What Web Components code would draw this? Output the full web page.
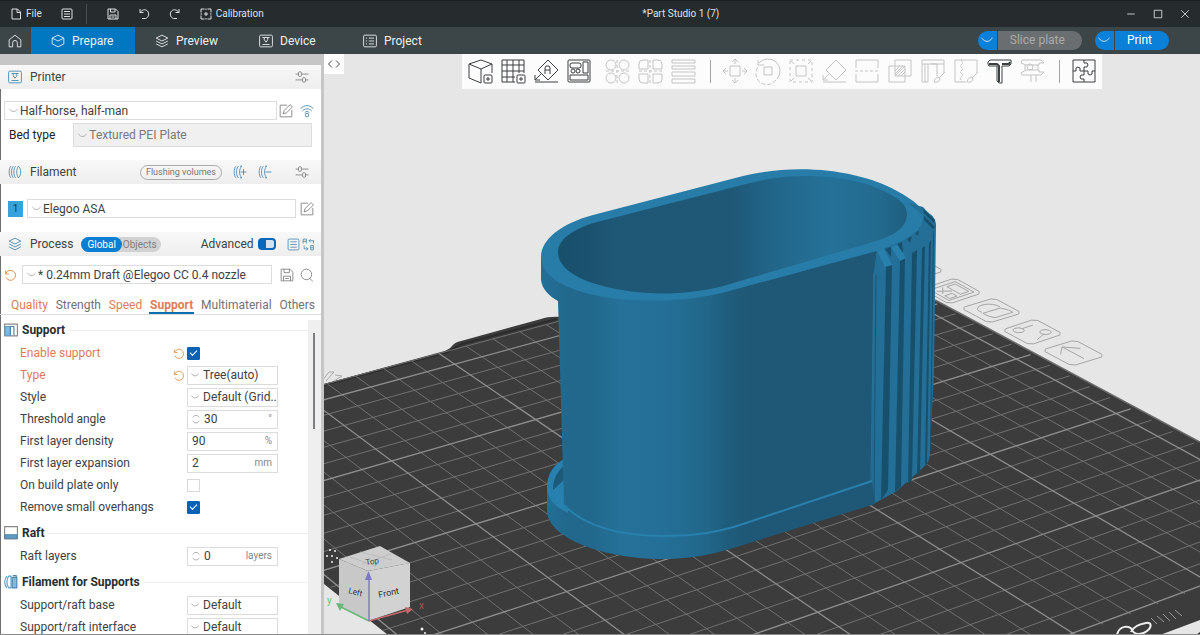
<!DOCTYPE html>
<html lang="en">
<head>
<meta charset="utf-8">
<meta name="viewport" content="width=device-width, initial-scale=1">
<title>Part Studio 1</title>
<style>
    html, body {
        height: 100%;
        margin: 0;
    }
    body {
        font: 12px/16px Roboto, "Noto Sans", sans-serif;
        color: #3e4244;
        overflow: hidden;
    }
</style>
</head>
<body>
<slicer-app></slicer-app>

<script>
// all glyphs are drawn on a 24 x 24 grid
const ICONS = {
    file: '<path d="M4 2h11l6 6v14H4zM14 2v7h7"/>',
    list: '<rect x="2" y="2" width="20" height="20" rx="2"/><path d="M6 7h12M6 12h12M6 17h12"/>',
    save: '<path d="M2 2h15l5 5v15H2zM7 2v6h9V2M6 22v-8h12v8M9 18h6"/>',
    undo: '<path d="M4 2v7h7M4 9C8 3 15 2 19 6s3 13-4 15H8"/>',
    redo: '<path d="M20 2v7h-7M20 9C16 3 9 2 5 6S2 19 9 21h7"/>',
    reset: '<path d="M3 3v7h7M3.500 9.500A10 10 0 1 1 4 17"/>',
    calibrate: '<path d="M2 9V2h7M15 2h7v7M22 15v7h-7M9 22H2v-7M12 8v8M8 12h8M12 1v3M12 20v3M1 12h3M20 12h3"/>',
    home: '<path d="M2 10 12 2l10 8v12h-6v-7a4 4 0 0 0-8 0v7H2z"/>',
    cube: '<path d="M12 2 22 7v10l-10 5L2 17V7zM2 7l10 5 10-5"/>',
    layers: '<path d="M12 2 22 7l-10 5L2 7zM2 12l10 5 10-5M2 17l10 5 10-5"/>',
    device: '<rect x="1" y="2" width="22" height="20" rx="2"/><path d="M6 6h12M9 6v4l3 4 3-4V6M6 18h12"/>',
    project: '<rect x="1" y="2" width="22" height="20" rx="2"/><path d="M5 7h2M5 12h2M5 17h2M10 7h9M10 12h9M10 17h9"/>',
    down: '<path d="M1 8q6 7 11 7t11-7"/>',
    spin: '<path d="M2 7q5-6 10-6t10 6M2 18q5 6 10 6t10-6"/>',
    sliders: '<path d="M1 7h5M12 7h11M1 17h11M18 17h5"/><rect x="6" y="3" width="5" height="8" rx="2"/><rect x="13" y="13" width="5" height="8" rx="2"/>',
    edit: '<path d="M14 2H2v20h20V10M7 17l2-6L19 1l4 4-10 10z"/>',
    wifi: '<path d="M1 8c7-7 15-7 22 0M4 12c5-5 11-5 16 0M8 15c3-3 5-3 8 0"/><circle cx="12" cy="19" r="3"/>',
    spool: '<path d="M5 2c-4 5-4 15 0 20M9 2c-4 5-4 15 0 20M13 2c-4 5-4 15 0 20M18 2c5 5 5 15 0 20-4-5-4-15 0-20z"/>',
    spoolAdd: '<path d="M5 2c-4 5-4 15 0 20M9 2c-4 5-4 15 0 20M15 2c-5 5-5 15 0 20M12 2h3M12 22h3M13 12h10M18 7v10"/>',
    spoolRemove: '<path d="M5 2c-4 5-4 15 0 20M9 2c-4 5-4 15 0 20M15 2c-5 5-5 15 0 20M12 2h3M12 22h3M13 12h10"/>',
    compare: '<path d="M2 10V2h6v8M2 6h6M16 14h5v8h-5zM16 18h5M13 5h9M13 5l3-3M13 5l3 3M21 5v5M4 14v6h7M11 20l-3-3M11 20l-3 3"/>',
    search: '<circle cx="11" cy="11" r="9"/><path d="m17 18 5 5"/>',
    collapse: '<path d="m8 5-7 7 7 7M16 5l7 7-7 7"/>',
    minimize: '<path d="M3 12h18"/>',
    maximize: '<rect x="3" y="3" width="18" height="18"/>',
    close: '<path d="m3 3 18 18M21 3 3 21"/>',
    support: '<rect x="1" y="2" width="22" height="20" stroke="#888"/><path d="M2 6h9v15H2z" fill="#7fbbe0" stroke="#5b9fc9"/><path d="M11 21V6h6v15" stroke="#4a86ad"/>',
    raft: '<rect x="1" y="1" width="22" height="21" stroke="#888"/><path d="M2 15h20v6H2z" fill="#5f9cc4" stroke="#4a86ad"/>',
    spools: '<path d="M5 2C0 7 0 17 5 22M8 2c-4 5-4 15 0 20h4V2z" stroke="#5b9fc9"/><rect x="14" y="4" width="8" height="18" fill="#7fbbe0" stroke="#4a86ad"/><path d="M15 1h6v3" stroke="#4a86ad"/>',
    addCube: '<path d="M13 24 1 19V5l12-4 11 4v9M1 5l12 5 11-5M13 10v14"/><rect x="16" y="16" width="8" height="8" rx="1"/><path d="M18 20h4M20 18v4"/>',
    addPlate: '<path d="M14 23H1V1h22v13M6 1v22M12 1v22M18 1v13M1 6h22M1 12h22M1 18h13"/><rect x="16" y="16" width="8" height="8" rx="1"/><path d="M18 20h4M20 18v4"/>',
    orient: '<path d="m14 1 10 10-10 10L4 11zM11 15v-6l1-2h3l1 2v6M11 11h5M1 23h23M7 15l-6 6M1 16v5h5"/>',
    arrange: '<rect x="1" y="1" width="22" height="22" rx="1"/><rect x="3" y="4" width="11" height="5" rx="2"/><rect x="16" y="3" width="5" height="11"/><circle cx="6" cy="12" r="2"/><circle cx="11" cy="12" r="2"/><path d="M3 16h18v5H3z"/>',
    splitObjects: '<circle cx="6" cy="6" r="5"/><circle cx="19" cy="6" r="5"/><circle cx="6" cy="19" r="5"/><circle cx="19" cy="19" r="5"/><path d="M12 1v23M1 12h23" stroke-dasharray="3 2"/>',
    splitParts: '<path d="M10 1v9H1V5q0-4 4-4zM15 1h5q4 0 4 4v5h-9zM1 15h9v9H5q-4 0-4-4zM15 15h9v5q0 4-4 4h-5z"/><path d="M12 1v23M1 12h23" stroke-dasharray="3 2"/>',
    variable: '<path d="M1 1h23v3H1zM1 7h23v3H1zM1 13h23v4H1zM1 20h23v4H1z"/>',
    move: '<rect x="7" y="7" width="10" height="10"/><path d="M12 5V0M9 3l3-3 3 3M12 19v5M9 21l3 3 3-3M5 12H0M3 9l-3 3 3 3M19 12h5M21 9l3 3-3 3"/>',
    rotate: '<rect x="8" y="8" width="8" height="8"/><path d="M3 4a11 11 0 0 1 18 16"/><path d="M20 21A11 11 0 0 1 2 8" stroke-dasharray="4 2"/><path d="M2 1v5h6"/>',
    scale: '<rect x="7" y="7" width="10" height="10"/><rect x="1" y="1" width="22" height="22" stroke-dasharray="3 3"/><path d="m5 5-3-3M19 5l3-3M5 19l-3 3M19 19l3 3"/>',
    face: '<path d="m14 1 10 10-10 10L4 11zM1 23h23M7 15l-6 6M1 16v5h5"/>',
    cut: '<path d="M1 9V1h22v8M1 15v8h22v-8"/><path d="M0 12h24" stroke-dasharray="3 2"/>',
    boolean: '<path d="M1 7h16v16H1zM7 1h16v16H7zM7 12l5-5M7 15l8-8M7 17 17 7M10 17l7-7M13 17l4-4"/>',
    paint: '<path d="M1 23V1h22v13M1 5h22M4 5v18M7 5v18H1M10 5h6v12M24 13l-6 6M18 18q-4 0-5 5 5 1 6-3z"/>',
    seam: '<path d="M12 23H1V1h22v13M24 13l-6 6M18 18q-4 0-5 5 5 1 6-3z"/><path d="M7 1l2 3-3 3 3 3-3 3 3 3-3 3 2 4" stroke-dasharray="3 1"/>',
    emboss: '<path d="M3 1 1 3v2l1 2h8v15l2 2h3V7h7l2-2V1z" fill="#fff"/><path d="M2 5h8l2 2v16M15 5h7l1-2" stroke-width="2"/>',
    measure: '<path d="M2 1h19l3 3h-5v2H6L1 4zM1 14l5-3h13v2h5l-3 3H2zM5 6v5M18 6v5M11 16v7M16 16v7"/><circle cx="10" cy="8" r="3"/>',
    assembly: '<rect x="1" y="1" width="22" height="22"/><path d="M12 1v3q4-1 4 2t-4 2v6M12 23v-3q-4 1-4-2t4-2v-2M1 12h3q-1-4 2-4t2 4h8q-1 4 2 4t2-4h3"/>'
};

class UiIcon extends HTMLElement {
    connectedCallback() {
        this.attachShadow({mode: 'open'}).innerHTML = `
        <style>
            :host {
                display: inline-block;
                flex: none;
                width: var(--size, 14px);
                height: var(--size, 14px);
            }
            svg {
                display: block;
                width: 100%;
                height: 100%;
                overflow: visible;
                fill: none;
                stroke: currentColor;
                stroke-width: var(--stroke, 2);
                stroke-linejoin: round;
            }
        </style>
        <svg viewBox="0 0 24 24" aria-hidden="true">${ICONS[this.getAttribute('name')]}</svg>`;
    }
}
customElements.define('ui-icon', UiIcon);

class TitleBar extends HTMLElement {
    connectedCallback() {
        this.attachShadow({mode: 'open'}).innerHTML = `
        <style>
            :host {
                display: flex;
                align-items: center;
                height: 27px;
                background: #262b2d;
                border-top: 1px solid #1b1f20;
                box-sizing: border-box;
                color: #dfe2e3;
                font-size: 10px;
                --size: 12px;
            }
            button {
                display: flex;
                align-items: center;
                gap: 4px;
                padding: 0;
                border: 0;
                background: none;
                color: inherit;
                font: inherit;
            }
            .tools, .window {
                display: flex;
                align-items: center;
            }
            .tools {
                gap: 19px;
                padding-left: 10px;
            }
            hr {
                width: 1px;
                height: 20px;
                margin: 0 1px 0 -6px;
                border: 0;
                background: #4a5052;
            }
            .window {
                gap: 17px;
                padding-right: 10px;
                --size: 10px;
            }
            h1 {
                flex: 1;
                margin: 0;
                padding-right: 28px;
                font: inherit;
                text-align: center;
            }
        </style>
        <div class="tools">
            <button><ui-icon name="file"></ui-icon>File</button>
            <button aria-label="Menu"><ui-icon name="list"></ui-icon></button>
            <hr>
            <button aria-label="Save"><ui-icon name="save"></ui-icon></button>
            <button aria-label="Undo"><ui-icon name="undo"></ui-icon></button>
            <button aria-label="Redo"><ui-icon name="redo"></ui-icon></button>
            <button><ui-icon name="calibrate"></ui-icon>Calibration</button>
        </div>
        <h1>*Part Studio 1 (7)</h1>
        <div class="window">
            <button aria-label="Minimize"><ui-icon name="minimize"></ui-icon></button>
            <button aria-label="Maximize"><ui-icon name="maximize"></ui-icon></button>
            <button aria-label="Close"><ui-icon name="close"></ui-icon></button>
        </div>`;
    }
}
customElements.define('title-bar', TitleBar);

class SplitButton extends HTMLElement {
    connectedCallback() {
        const disabled = this.hasAttribute('disabled') ? 'disabled' : '';
        this.attachShadow({mode: 'open'}).innerHTML = `
        <style>
            :host {
                display: flex;
                gap: 1px;
                height: 19px;
                border-radius: 10px;
                overflow: hidden;
            }
            button {
                padding: 0;
                border: 0;
                background: #0a80d8;
                color: #fff;
                font: inherit;
            }
            .more {
                width: 19px;
                --size: 12px;
                display: grid;
                place-items: center;
            }
            .main {
                padding: 0 17px 0 12px;
            }
            .main:disabled {
                background: #6b6e70;
                color: #a9abac;
            }
        </style>
        <button class="more" aria-label="Options"><ui-icon name="down"></ui-icon></button>
        <button class="main" ${disabled}><slot></slot></button>`;
    }
}
customElements.define('split-button', SplitButton);

class MainTabs extends HTMLElement {
    connectedCallback() {
        this.attachShadow({mode: 'open'}).innerHTML = `
        <style>
            :host {
                display: flex;
                height: 27px;
                background: #3c4548;
                color: #eef0f0;
                --stroke: 1.5;
            }
            nav {
                display: flex;
                flex: 1;
            }
            a {
                display: flex;
                align-items: center;
                gap: 7px;
                width: 104px;
                padding-left: 20px;
                box-sizing: border-box;
                color: inherit;
                text-decoration: none;
            }
            a.home {
                width: 31px;
                padding-left: 8px;
            }
            a.current {
                background: #0078c1;
            }
            .actions {
                display: flex;
                align-items: center;
                gap: 13px;
                padding: 0 31px 1px 0;
            }
        </style>
        <nav>
            <a class="home" href="#home" aria-label="Home"><ui-icon name="home"></ui-icon></a>
            <a class="current" href="#prepare"><ui-icon name="cube"></ui-icon>Prepare</a>
            <a href="#preview"><ui-icon name="layers"></ui-icon>Preview</a>
            <a href="#device"><ui-icon name="device"></ui-icon>Device</a>
            <a href="#project"><ui-icon name="project"></ui-icon>Project</a>
        </nav>
        <div class="actions">
            <split-button disabled>Slice plate</split-button>
            <split-button>Print</split-button>
        </div>`;
    }
}
customElements.define('main-tabs', MainTabs);

class ComboBox extends HTMLElement {
    connectedCallback() {
        const disabled = this.hasAttribute('disabled') ? 'disabled' : '';
        this.attachShadow({mode: 'open'}).innerHTML = `
        <style>
            :host {
                display: grid;
                grid-template-columns: 16px 1fr;
                align-items: center;
                flex: 1;
                min-width: 0;
                height: 19px;
                box-sizing: border-box;
                border: 1px solid #dcdcdc;
                background: #fff;
                --size: 9px;
            }
            :host([disabled]) {
                height: 24px;
                background: #f0f0f0;
                color: #7a7a7a;
            }
            ui-icon {
                grid-area: 1 / 1;
                margin-left: 4px;
                color: #777;
            }
            select {
                grid-area: 1 / 1 / 2 / 3;
                width: 100%;
                padding: 0 0 0 15px;
                border: 0;
                appearance: none;
                background: none;
                color: inherit;
                font: inherit;
                opacity: 1;
            }
        </style>
        <ui-icon name="down"></ui-icon>
        <select aria-label="${this.getAttribute('label')}" ${disabled}><option>${this.getAttribute('value')}</option></select>`;
    }
}
customElements.define('combo-box', ComboBox);

class PanelHeader extends HTMLElement {
    connectedCallback() {
        this.attachShadow({mode: 'open'}).innerHTML = `
        <style>
            :host {
                display: flex;
                align-items: center;
                gap: 8px;
                height: 24px;
                padding: 0 12px 0 8px;
                background: linear-gradient(#f8f8f8, #eee);
            }
            h2 {
                flex: 1;
                margin: 0;
                font: inherit;
            }
            ui-icon {
                color: #4b87ae;
            }
        </style>
        <ui-icon name="${this.getAttribute('icon')}"></ui-icon>
        <h2>${this.getAttribute('label')}</h2>
        <slot></slot>`;
    }
}
customElements.define('panel-header', PanelHeader);

class SettingGroup extends HTMLElement {
    connectedCallback() {
        this.attachShadow({mode: 'open'}).innerHTML = `
        <style>
            :host {
                display: block;
                padding-top: 3px;
                --stroke: 2;
            }
            h3 {
                display: flex;
                align-items: center;
                gap: 4px;
                height: 24px;
                margin: 0 0 0 2px;
                font-size: 12px;
                font-weight: 700;
                color: #262e30;
            }
            h3::after {
                content: "";
                flex: 1;
                height: 1px;
                background: #eee;
            }
        </style>
        <h3><ui-icon name="${this.getAttribute('icon')}"></ui-icon>${this.getAttribute('label')}</h3>
        <slot></slot>`;
    }
}
customElements.define('setting-group', SettingGroup);

class SettingRow extends HTMLElement {
    connectedCallback() {
        this.attachShadow({mode: 'open'}).innerHTML = `
        <style>
            :host {
                display: grid;
                grid-template-columns: 150px 11px 91px;
                align-items: center;
                column-gap: 3px;
                height: 22px;
                padding-left: 18px;
            }
            :host([modified]) label {
                color: #e07c56;
            }
            .reset {
                padding: 0;
                border: 0;
                background: none;
                display: grid;
                color: #e5964a;
                --size: 11px;
            }
            .field {
                grid-column: 3;
                display: flex;
                align-items: center;
                gap: 4px;
                height: 19px;
                padding: 0 5px 0 4px;
                box-sizing: border-box;
                border: 1px solid #dcdcdc;
                --size: 8px;
            }
            .field ui-icon {
                color: #888;
            }
            .field select, .field input {
                flex: 1;
                width: 0;
                padding: 0;
                border: 0;
                outline: 0;
                appearance: none;
                background: none;
                color: inherit;
                font: inherit;
            }
            .field.pick {
                padding: 0 0 0 3px;
            }
            .field span {
                color: #888;
                font-size: 10px;
            }
            .check {
                grid-column: 3;
                display: grid;
                width: 13px;
                height: 13px;
                margin: 0;
                appearance: none;
                border: 1px solid #d8d8d8;
                box-sizing: border-box;
                place-items: center;
            }
            .check:checked {
                border-color: #0862b5;
                border-radius: 1px;
                background: #0862b5;
            }
            .check:checked::after {
                content: "";
                width: 7px;
                height: 4px;
                margin-bottom: 2px;
                box-sizing: border-box;
                border: solid #fff;
                border-width: 0 0 1px 1px;
                transform: rotate(-45deg);
            }
        </style>
        <label for="control">${this.getAttribute('label')}</label>
        ${this.hasAttribute('modified') ? '<button class="reset" aria-label="Reset"><ui-icon name="reset"></ui-icon></button>' : ''}
        ${this.control()}`;
    }

    control() {
        const value = this.getAttribute('value');
        const unit = this.getAttribute('unit') || '';
        switch (this.getAttribute('kind')) {
            case 'check':
                return `<input class="check" id="control" type="checkbox" ${value === 'on' ? 'checked' : ''}>`;
            case 'select':
                return `<div class="field pick"><ui-icon name="down"></ui-icon><select id="control"><option>${value}</option></select></div>`;
            case 'spin':
                return `<div class="field"><ui-icon name="spin"></ui-icon><input id="control" value="${value}"><span>${unit}</span></div>`;
            default:
                return `<div class="field"><input id="control" value="${value}"><span>${unit}</span></div>`;
        }
    }
}
customElements.define('setting-row', SettingRow);

class SidePanel extends HTMLElement {
    connectedCallback() {
        this.attachShadow({mode: 'open'}).innerHTML = `
        <style>
            :host {
                display: flex;
                flex-direction: column;
                flex: 0 0 324px;
                min-height: 0;
                box-sizing: border-box;
                border: solid #c6c6c6;
                border-width: 11px 3px 0 0;
                box-shadow: inset 1px 0 #6d6f70;
                background: #fff;
                overflow: hidden;
                --stroke: 1.5;
            }
            button {
                display: grid;
                padding: 0;
                border: 0;
                background: none;
                color: #808080;
                font: inherit;
            }
            .row {
                display: flex;
                align-items: center;
                gap: 8px;
                padding: 0 7px 0 4px;
            }
            .printer {
                padding-top: 12px;
                gap: 2px;
            }
            .printer .blue {
                margin-left: 5px;
            }
            .bed {
                padding: 3px 9px 13px 9px;
                gap: 18px;
                color: #222;
            }
            .filament {
                padding: 15px 7px 14px 8px;
                gap: 4px;
            }
            .swatch {
                width: 15px;
                background: #37a3da;
                color: #14384d;
                font-size: 10px;
                text-align: center;
            }
            .preset {
                padding: 9px 7px 0 4px;
                gap: 6px;
            }
            .preset combo-box {
                margin-right: 2px;
            }
            .blue {
                color: #4b87ae;
            }
            .pill {
                padding: 0 5px;
                border: 1px solid #aaa;
                border-radius: 8px;
                font-size: 9px;
                line-height: 13px;
                color: #777;
            }
            .tool {
                margin-left: 3px;
            }
            .gap {
                margin-left: 15px;
            }
            .scope {
                display: flex;
                height: 15px;
                margin-right: 32px;
                border-radius: 8px;
                background: #d2d2d2;
                font-size: 10px;
                line-height: 15px;
            }
            .scope button {
                padding: 0 4px 0 1px;
                line-height: 15px;
            }
            .scope .on {
                padding: 0 6px;
                border-radius: 8px;
                background: #0a7ed3;
                color: #fff;
            }
            .advanced {
                display: flex;
                align-items: center;
                gap: 4px;
            }
            .advanced input {
                appearance: none;
                width: 18px;
                height: 12px;
                margin: 0 3px 0 0;
                border: 2px solid #0a66b8;
                box-sizing: border-box;
                border-radius: 4px;
                background: linear-gradient(to right, #0a66b8 6px, #cfe3f3 6px);
            }
            .right {
                display: flex;
                gap: 2px;
                margin-right: -5px;
                --size: 13px;
            }
            nav {
                display: flex;
                justify-content: space-between;
                height: 19px;
                margin-top: 11px;
                padding: 0 5px 0 10px;
                border-bottom: 1px solid #ddd;
            }
            nav a {
                padding: 2px 1px 0;
                color: #6f7375;
                text-decoration: none;
            }
            nav .changed {
                color: #e07c56;
            }
            nav .current {
                border-bottom: 2px solid #0a6fb0;
                font-weight: 700;
            }
            .settings {
                display: flex;
                flex: 1;
                min-height: 0;
                padding-left: 2px;
            }
            .list {
                flex: 1;
                overflow: hidden;
            }
            .track {
                width: 13px;
                padding: 13px 6px 0 5px;
                margin-top: 5px;
                box-sizing: border-box;
                background: #efefef;
            }
            .thumb {
                height: 96px;
                background: #7d7f80;
            }
        </style>
        <panel-header icon="device" label="Printer">
            <button aria-label="Printer settings"><ui-icon name="sliders"></ui-icon></button>
        </panel-header>
        <div class="row printer">
            <combo-box label="Printer" value="Half-horse, half-man"></combo-box>
            <button aria-label="Edit printer"><ui-icon name="edit"></ui-icon></button>
            <button class="blue" aria-label="Connection"><ui-icon name="wifi"></ui-icon></button>
        </div>
        <div class="row bed">
            <span>Bed type</span>
            <combo-box label="Bed type" value="Textured PEI Plate" disabled></combo-box>
        </div>
        <panel-header icon="spool" label="Filament">
            <button class="pill">Flushing volumes</button>
            <button class="blue tool" aria-label="Add filament"><ui-icon name="spoolAdd"></ui-icon></button>
            <button class="blue tool" aria-label="Remove filament"><ui-icon name="spoolRemove"></ui-icon></button>
            <button class="gap" aria-label="Filament settings"><ui-icon name="sliders"></ui-icon></button>
        </panel-header>
        <div class="row filament">
            <span class="swatch">1</span>
            <combo-box label="Filament" value="Elegoo ASA"></combo-box>
            <button aria-label="Edit filament"><ui-icon name="edit"></ui-icon></button>
        </div>
        <panel-header icon="layers" label="Process">
            <div class="scope"><button class="on">Global</button><button>Objects</button></div>
            <label class="advanced">Advanced <input type="checkbox" role="switch" checked></label>
            <div class="right">
                <button class="blue" aria-label="Parameter list"><ui-icon name="list"></ui-icon></button>
                <button class="blue" aria-label="Compare presets"><ui-icon name="compare"></ui-icon></button>
            </div>
        </panel-header>
        <div class="row preset">
            <button style="color: #e5964a; --size: 12px; --stroke: 2" aria-label="Reset preset"><ui-icon name="reset"></ui-icon></button>
            <combo-box label="Process" value="* 0.24mm Draft @Elegoo CC 0.4 nozzle"></combo-box>
            <button aria-label="Save preset"><ui-icon name="save"></ui-icon></button>
            <button aria-label="Search"><ui-icon name="search"></ui-icon></button>
        </div>
        <nav>
            <a class="changed" href="#quality">Quality</a>
            <a href="#strength">Strength</a>
            <a class="changed" href="#speed">Speed</a>
            <a class="changed current" href="#support">Support</a>
            <a href="#multimaterial">Multimaterial</a>
            <a href="#others">Others</a>
        </nav>
        <div class="settings">
            <div class="list">
                <setting-group icon="support" label="Support">
                    <setting-row label="Enable support" kind="check" value="on" modified></setting-row>
                    <setting-row label="Type" kind="select" value="Tree(auto)" modified></setting-row>
                    <setting-row label="Style" kind="select" value="Default (Grid..."></setting-row>
                    <setting-row label="Threshold angle" kind="spin" value="30" unit="°"></setting-row>
                    <setting-row label="First layer density" value="90" unit="%"></setting-row>
                    <setting-row label="First layer expansion" value="2" unit="mm"></setting-row>
                    <setting-row label="On build plate only" kind="check"></setting-row>
                    <setting-row label="Remove small overhangs" kind="check" value="on"></setting-row>
                </setting-group>
                <setting-group icon="raft" label="Raft">
                    <setting-row label="Raft layers" kind="spin" value="0" unit="layers"></setting-row>
                </setting-group>
                <setting-group icon="spools" label="Filament for Supports">
                    <setting-row label="Support/raft base" kind="select" value="Default"></setting-row>
                    <setting-row label="Support/raft interface" kind="select" value="Default"></setting-row>
                </setting-group>
            </div>
            <div class="track"><div class="thumb"></div></div>
        </div>`;
    }
}
customElements.define('side-panel', SidePanel);

class ViewToolbar extends HTMLElement {
    connectedCallback() {
        const button = (name, off) =>
            `<button aria-label="${name}" ${off ? 'disabled' : ''}><ui-icon name="${name}"></ui-icon></button>`;
        this.attachShadow({mode: 'open'}).innerHTML = `
        <style>
            :host {
                display: flex;
                align-items: center;
                gap: 9px;
                height: 34px;
                padding: 0 6px 1px;
                background: #fcfcfc;
                --size: 24px;
                --stroke: 1;
            }
            button {
                display: grid;
                padding: 0;
                border: 0;
                background: none;
                color: #3a3f41;
            }
            button:disabled {
                color: #c4c4c4;
            }
            .first {
                display: flex;
                gap: 9px;
                margin-right: 5px;
            }
            hr {
                width: 1px;
                height: 23px;
                margin: 0 3px 0 6px;
                border: 0;
                background: #a5a5a5;
            }
        </style>
        <div class="first">${['addCube', 'addPlate', 'orient', 'arrange'].map(n => button(n)).join('')}</div>
        ${['splitObjects', 'splitParts', 'variable'].map(n => button(n, true)).join('')}
        <hr>
        ${['move', 'rotate', 'scale', 'face', 'cut', 'boolean', 'paint', 'seam'].map(n => button(n, true)).join('')}
        ${button('emboss')}
        ${button('measure', true)}
        <hr>
        ${button('assembly')}`;
    }
}
customElements.define('view-toolbar', ViewToolbar);

class ModelView extends HTMLElement {
    connectedCallback() {
        this.attachShadow({mode: 'open'}).innerHTML = `
        <style>
            :host {
                display: grid;
                flex: 1;
                min-width: 0;
                min-height: 0;
                background: #e6e6e6;
            }
            .scene, .overlay {
                grid-area: 1 / 1;
                min-width: 0;
                min-height: 0;
            }
            .scene {
                width: 100%;
                height: 100%;
            }
            .overlay {
                display: flex;
                align-items: flex-start;
                z-index: 1;
            }
            .tools {
                display: flex;
                flex: 1;
                justify-content: center;
                padding-left: 20px;
            }
            button {
                display: grid;
                place-items: center;
                width: 20px;
                height: 20px;
                padding: 0;
                border: 0;
                background: #fff;
                color: #444;
                --size: 12px;
            }
            .plate-icons {
                fill: none;
                stroke: #a5a5a5;
            }
            .plate-icons * {
                vector-effect: non-scaling-stroke;
            }
        </style>
        <svg class="scene" viewBox="324 54 876 580" preserveAspectRatio="xMinYMin slice" role="img" aria-label="Plate with model">
            <defs>
                <linearGradient id="outside" gradientUnits="userSpaceOnUse" x1="541" x2="870" y1="0" y2="0">
                    <stop offset="0" stop-color="#236f99"/>
                    <stop offset=".08" stop-color="#22688c"/>
                    <stop offset=".16" stop-color="#22688c"/>
                    <stop offset=".24" stop-color="#257199"/>
                    <stop offset=".38" stop-color="#246f97"/>
                    <stop offset=".5" stop-color="#22678a"/>
                    <stop offset=".57" stop-color="#1f5c7b"/>
                    <stop offset=".63" stop-color="#1f5876"/>
                    <stop offset="1" stop-color="#1f5876"/>
                </linearGradient>
                <linearGradient id="inside" gradientUnits="userSpaceOnUse" x1="558" x2="907" y1="0" y2="0">
                    <stop offset="0" stop-color="#184f6b"/>
                    <stop offset=".1" stop-color="#1b526f"/>
                    <stop offset=".16" stop-color="#1f5876"/>
                    <stop offset=".5" stop-color="#1f5876"/>
                    <stop offset=".62" stop-color="#22668a"/>
                    <stop offset=".78" stop-color="#257198"/>
                    <stop offset=".92" stop-color="#236a8e"/>
                    <stop offset="1" stop-color="#1f5f80"/>
                </linearGradient>
            </defs>
            <g class="bed">
                <path d="M300 391 324 384 441 352Q449 350 452 346T461 341L541 319Q549 316 562 317L700 290 935 300 1200 442V620L1160 635H388L324 584 300 564Z" fill="#3b3c3b"/>
                <path d="M300 391 324 385 448 352 462 344 557 319" fill="none" stroke="#2b2c2b" stroke-width="2"/>
                <path d="M935 300 1200 442" stroke="#6a6b6a" stroke-width="1.500"/>
                <path class="minor" fill="none" stroke="#6f706f"/>
                <path class="major" fill="none" stroke="#8d8e8d" stroke-width="1.300"/>
            </g>
            <path d="M1196 635h4v-3z" fill="#333"/>
            <g fill="none" stroke="#eee" stroke-width="2">
                <path d="M1117 635c2-10 13-10 15-5s10 5 15 1 5-9-1-8-13 4-15 9"/>
                <path d="m1151 618 6 6m0-8 7 6m-1-8 7 7m-1-9 7 7m-1-9 7 6" stroke="#999" stroke-width="1"/>
            </g>
            <g fill="#f2f2f2">
                <circle cx="327" cy="556" r="1"/><circle cx="330" cy="550" r="1"/><circle cx="332" cy="556" r="1"/>
                <circle cx="335" cy="551" r="1"/><circle cx="332" cy="562" r="1"/><circle cx="337" cy="558" r="1"/>
                <circle cx="422" cy="629" r="1.500"/><circle cx="425" cy="633" r="1"/>
            </g>
            <path d="M322 381l7-9h5l-8 9M335 375l7 1-8 5" fill="none" stroke="#aaa"/>

            <g class="plate-icons">
                <path transform="matrix(33 -10 30 16 881 265)" d="M.1 0H.9L1 .1V.9L.9 1H.1L0 .9V.1zM.3 .8H.7V.6"/>
                <path transform="matrix(33 -11 27 15 922 289)" d="M.1 0H.9L1 .1V.9L.9 1H.1L0 .9V.1zM.12 .15H.88V.85H.12zM.55 .25H.8V.75H.55zM.2 .6H.42V.78H.2zM.2 .3 .5 .5M.45 .22 .22 .5"/>
                <path transform="matrix(33 -10 28 15 961 308)" d="M.1 0H.9L1 .1V.9L.9 1H.1L0 .9V.1zM.23 .51H.76L.85 .7V.85H.31Q.2 .7 .23 .51zM.25 .45C.15 .1 .8 0 .8 .45"/>
                <g transform="matrix(33 -11 28 15 1002 330)">
                    <path d="M.1 0H.9L1 .1V.9L.9 1H.1L0 .9V.1zM.42 .22H.75M.32 .88 .64 .74"/>
                    <circle cx=".3" cy=".24" r=".13"/>
                    <circle cx=".74" cy=".68" r=".13"/>
                </g>
                <path transform="matrix(33 -10 30 16 1042 350)" d="M.1 0H.9L1 .1V.9L.9 1H.1L0 .9V.1zM.5 .12V.85M.2 .4 .5 .12 .8 .4"/>
            </g>

            <g class="model">
                <!-- foot -->
                <path d="M564 459C553 465 547 475 547 487V512C550 540 607 559 663 559 692 559 715 554 743 545L875 504 880 470Z" fill="url(#outside)"/>
                <path d="M566 458C553 465 547 475 547 487 547 499 555 507 568 513V458Z" fill="#2780ad"/>
                <path d="M566 464C557 471 553 479 553 490L566 478Z" fill="#1c5a79"/>
                <!-- shell -->
                <path d="M541 257V280C542 289 549 296 558 301L564 506C584 527 620 536 663 536 697 536 719 532 743 524L872 480 877 250 733 280Z" fill="url(#outside)"/>
                <path d="M564 505C584 526 620 536 663 536 697 536 719 532 743 524L872 481" fill="none" stroke="#2780ad" stroke-width="2"/>
                <!-- ribs -->
                <path d="M877 251 923 210Q935 214 936 225L934 372 930 450Q930 461 926 465L897 491 875 503 872 480 873 276Z" fill="#246f97"/>
                <path d="M874 274 871 480" stroke="#2a7299"/>
                <path d="M876 275 874 502" stroke="#1b5573"/>
                <g fill="#18506c">
                    <path d="M886 266 892 265 888 490 881 500Z"/>
                    <path d="M900 260 905 258 901 487 895 492Z"/>
                    <path d="M912 253 917 250 912 480 908 484Z"/>
                    <path d="M922 248 925 246 920 472 917 476Z"/>
                    <path d="M929 243 931 240 927 464 925 466Z"/>
                    <path d="M933 234 934 230 931 450 930 452Z"/>
                </g>
                <!-- rim -->
                <path d="M541 257C541 240 560 224 593 215L743 176C800 162 862 171 897 191 915 201 923 207 923 217 923 232 905 241 877 251L733 290C660 312 541 300 541 257Z" fill="#277ca8"/>
                <path d="M558 252C558 240 572 229 597 222L750 183C800 170 850 178 872 186 895 195 907 203 907 214 907 228 893 236 873 242L730 284C690 296 650 295 622 290 580 283 558 269 558 252Z" fill="url(#inside)"/>
                <path d="M877 251 885 267 892 265 884 249ZM891 247 900 261 906 258 898 244Z" fill="#2880ad"/>
                <path d="M908 203 923 207 935 220 936 226 920 213Z" fill="#246f97"/>
                <path d="M885 249 891 247V257ZM897 244 902 242 903 253ZM907 239 912 236 910 243ZM915 233 919 231 918 236ZM923 209 935 220 934 223 924 213ZM924 216 935 227 933 229 924 220Z" fill="#18506c"/>
            </g>

            <g class="gizmo" font-family="Roboto, sans-serif">
                <path d="M380 546 410 563 368 571 339 559Z" fill="#cdcdcd"/>
                <path d="M339 559 368 571V621L339 606Z" fill="#c8c8c8"/>
                <path d="M368 571 410 563V607L368 621Z" fill="#d2d2d2"/>
                <path d="M350 557 376 566M360 552 392 560M362 564 391 554" stroke="#bbb" fill="none"/>
                <text x="366" y="565" font-size="8" fill="#444" transform="rotate(-8 366 565)">Top</text>
                <text x="348" y="593" font-size="8" fill="#333" transform="rotate(14 348 593)">Left</text>
                <text x="379" y="598" font-size="9" fill="#333" transform="rotate(-12 379 598)">Front</text>
                <path d="M369 621 339 606" stroke="#68b877" stroke-width="1.500"/>
                <path d="M336 603 344 604 340 611Z" fill="#68b877"/>
                <path d="M369 621 408 610" stroke="#c4686a" stroke-width="1.500"/>
                <path d="M413 609 405 607 407 614Z" fill="#c4686a"/>
                <path d="M369 621V579" stroke="#7d78c4" stroke-width="1.500"/>
                <path d="M368.500 571 365 580H372Z" fill="#7d78c4"/>
                <text x="327" y="604" font-size="10" fill="#68c877">y</text>
                <text x="419" y="609" font-size="10" fill="#b05355">x</text>
            </g>
        </svg>
        <div class="overlay">
            <button aria-label="Collapse sidebar"><ui-icon name="collapse"></ui-icon></button>
            <div class="tools"><view-toolbar></view-toolbar></div>
        </div>`;
        this.drawGrid();
    }

    // perspective map of the plate: u runs to the right edge, v to the front
    project(u, v) {
        const w = 1 + 0.1149 * u - 0.1096 * v;
        const x = (637.4 * u + 200.4 * v + 391.7) / w;
        const y = (-117.6 * u + 131.1 * v + 461) / w;
        return x.toFixed(1) + ' ' + y.toFixed(1);
    }

    drawGrid() {
        const lines = {minor: '', major: ''};
        const left = -0.26, right = 1.03, back = -0.4, front = 1.34;
        for (let i = -5; i <= 20; i++) {
            const kind = i % 5 ? 'minor' : 'major';
            lines[kind] += `M${this.project(i / 20, back)}L${this.project(i / 20, front)}`;
        }
        for (let i = -6; i <= 20; i++) {
            const kind = i % 5 ? 'minor' : 'major';
            lines[kind] += `M${this.project(left, i / 15)}L${this.project(right, i / 15)}`;
        }
        for (const kind in lines) {
            this.shadowRoot.querySelector('.' + kind).setAttribute('d', lines[kind]);
        }
    }
}
customElements.define('model-view', ModelView);

class SlicerApp extends HTMLElement {
    connectedCallback() {
        this.attachShadow({mode: 'open'}).innerHTML = `
        <style>
            :host {
                display: flex;
                flex-direction: column;
                height: 100vh;
                box-sizing: border-box;
                border-bottom: 1px solid #8b8b8b;
            }
            main {
                display: flex;
                flex: 1;
                min-height: 0;
            }
        </style>
        <title-bar></title-bar>
        <main-tabs></main-tabs>
        <main>
            <side-panel></side-panel>
            <model-view></model-view>
        </main>`;
    }
}
customElements.define('slicer-app', SlicerApp);
</script>
</body>
</html>
